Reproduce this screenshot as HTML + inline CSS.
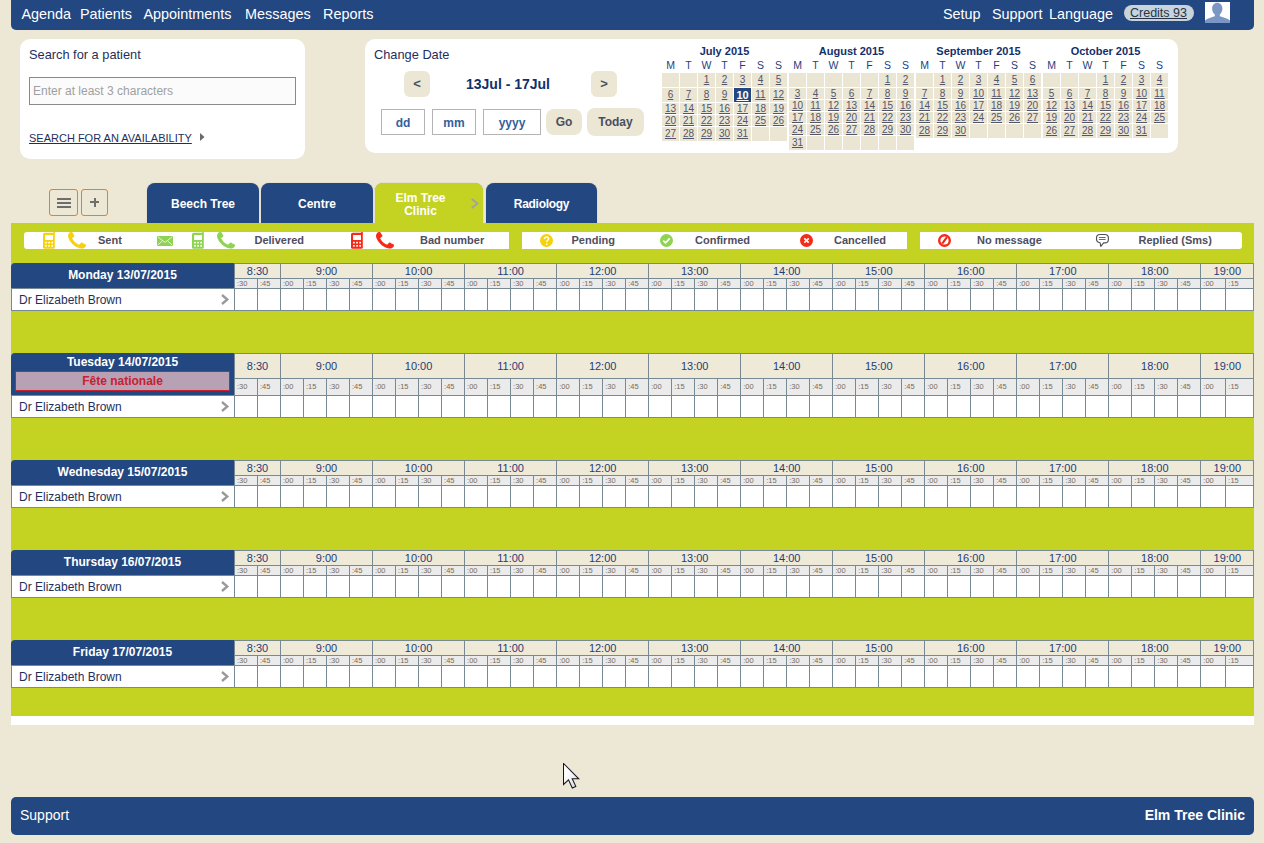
<!DOCTYPE html><html><head><meta charset="utf-8"><style>
*{margin:0;padding:0;box-sizing:border-box}
html,body{width:1264px;height:843px;overflow:hidden;background:#ede7d5;font-family:"Liberation Sans",sans-serif;position:relative}
.abs{position:absolute}
svg.abs{display:block}
.nav{position:absolute;left:11px;top:0;width:1243px;height:30px;background:#234780;border-radius:0 0 5px 5px}
.nav span{position:absolute;top:6px;font-size:14.4px;color:#fff;line-height:16px;white-space:nowrap}
.panel{position:absolute;background:#fff;border-radius:10px}
.t13{font-size:12.8px;color:#1f2f5c;line-height:15px;white-space:nowrap}
.btnb{position:absolute;background:#ece6d4;border-radius:6px;color:#465060;font-weight:bold;font-size:12px;text-align:center}
.inp{position:absolute;border:1px solid #b4b4b4;background:#fff;color:#33609c;font-weight:bold;font-size:12px;text-align:center}
.ttl{position:absolute;font-weight:bold;font-size:11px;color:#14306a;white-space:nowrap;line-height:12px;text-align:center;width:125px}
.dh{position:absolute;font-size:10.5px;color:#1f3f80;text-align:center;width:17px;line-height:12px}
.c{position:absolute;background:#ebe5d3;width:17px;font-size:10px;color:#52566a;text-align:center;text-decoration:underline}
.c.sel{background:#234780;color:#fff;font-weight:bold;font-size:11px}
.tab{position:absolute;top:183px;height:40px;background:#234780;border-radius:8px 8px 0 0;color:#fff;font-weight:bold;font-size:12px;text-align:center;box-shadow:0 0 1px #9a9a9a}
.lime{position:absolute;left:11px;top:223px;width:1243px;height:493px;background:#c4d222}
.leg{position:absolute;top:232px;height:17px;background:#fff}
.leg span{position:absolute;top:2px;font-size:11px;font-weight:bold;color:#4e4e5e;line-height:13px;white-space:nowrap}
.dayh{position:absolute;left:11px;width:223px;background:#234780;border-radius:4px 0 0 0;color:#fff;font-weight:bold;font-size:12px;text-align:center;line-height:14px}
.doc{position:absolute;left:11px;width:224px;height:23px;background:#fff;border:1px solid #778a93;border-right:none;font-size:12px;color:#1f2f5c;padding:4px 0 0 7px;line-height:14px}
.grid{position:absolute;left:234px;width:1020px;border-collapse:collapse;table-layout:fixed}
.grid td{border:1px solid #778a93;padding:0;overflow:hidden;white-space:nowrap}
.grid .h td{background:#efe9d8;font-size:11px;color:#1e3c78;text-align:center}
.grid .m td{background:#ebebeb;font-size:7.5px;color:#7a6a5a;padding-left:2px}
.grid .d td{background:#fff;height:22px}
.foot{position:absolute;left:11px;top:797px;width:1243px;height:38px;background:#234780;border-radius:5px;color:#fff}
</style></head><body>
<div class="nav">
<span style="left:10.5px">Agenda</span>
<span style="left:69px">Patients</span>
<span style="left:132.5px">Appointments</span>
<span style="left:234px">Messages</span>
<span style="left:312px">Reports</span>
<span style="left:932px">Setup</span>
<span style="left:981px">Support</span>
<span style="left:1038px">Language</span>
</div>
<div class="abs" style="left:1124px;top:5px;width:70px;height:16px;border-radius:8px;background:#c8d3db;"></div>
<div class="abs" style="left:1130px;top:6px;font-size:12.5px;line-height:15px;color:#263445;text-decoration:underline;white-space:nowrap">Credits 93</div>
<svg class="abs" style="left:1205px;top:2px" width="25" height="21" viewBox="0 0 25 21"><rect width="25" height="21" fill="#fff"/><path d="M12.2 0.8C9.2 0.8 7.1 3.2 7.1 6.6 7.1 9 8.1 11 9.8 12.4V14.3C7 15.4 2.2 16.4 0 18.6V21H25V18.6C22.8 16.4 17.8 15.4 14.8 14.3V12.4C16.5 11 17.4 9 17.4 6.6 17.4 3.2 15.3 0.8 12.2 0.8Z" fill="#7b96c4"/></svg>
<div class="panel" style="left:20px;top:39px;width:285px;height:120px"></div>
<div class="abs t13" style="left:29px;top:46.5px">Search for a patient</div>
<div class="abs" style="left:29px;top:77px;width:267px;height:28px;border:1px solid #8a8a8a;background:#fbfbfb;font-size:12px;color:#a0a0a0;padding:6px 0 0 3px;white-space:nowrap">Enter at least 3 characters</div>
<div class="abs" style="left:29px;top:132px;font-size:11px;color:#1f2f5c;text-decoration:underline;white-space:nowrap;line-height:13px">SEARCH FOR AN AVAILABILITY</div>
<svg class="abs" style="left:200px;top:133px" width="5" height="8"><path d="M0 0L4.5 4 0 8z" fill="#6a6a6a"/></svg>
<div class="panel" style="left:365px;top:39px;width:813px;height:114px"></div>
<div class="abs t13" style="left:374px;top:47px">Change Date</div>
<div class="btnb" style="left:404px;top:71px;width:26px;height:26px;line-height:26px;font-size:13px">&lt;</div>
<div class="btnb" style="left:591px;top:71px;width:26px;height:26px;line-height:26px;font-size:13px">&gt;</div>
<div class="abs" style="left:440px;top:76px;width:136px;text-align:center;font-weight:bold;font-size:14px;color:#14306a;line-height:16px">13Jul - 17Jul</div>
<div class="inp" style="left:381px;top:109px;width:44px;height:26px;line-height:26px">dd</div>
<div class="inp" style="left:432px;top:109px;width:44px;height:26px;line-height:26px">mm</div>
<div class="inp" style="left:483px;top:109px;width:58px;height:26px;line-height:26px">yyyy</div>
<div class="btnb" style="left:546px;top:109px;width:36px;height:26px;line-height:27px;border-radius:8px">Go</div>
<div class="btnb" style="left:587px;top:108px;width:57px;height:28px;line-height:29px;border-radius:8px">Today</div>
<div class="ttl" style="left:662px;top:45px">July 2015</div>
<div class="dh" style="left:662px;top:59px">M</div>
<div class="dh" style="left:680px;top:59px">T</div>
<div class="dh" style="left:698px;top:59px">W</div>
<div class="dh" style="left:716px;top:59px">T</div>
<div class="dh" style="left:734px;top:59px">F</div>
<div class="dh" style="left:752px;top:59px">S</div>
<div class="dh" style="left:770px;top:59px">S</div>
<div class="c" style="left:662px;top:73px;height:14px;line-height:14px"></div>
<div class="c" style="left:680px;top:73px;height:14px;line-height:14px"></div>
<div class="c" style="left:698px;top:73px;height:14px;line-height:14px">1</div>
<div class="c" style="left:716px;top:73px;height:14px;line-height:14px">2</div>
<div class="c" style="left:734px;top:73px;height:14px;line-height:14px">3</div>
<div class="c" style="left:752px;top:73px;height:14px;line-height:14px">4</div>
<div class="c" style="left:770px;top:73px;height:14px;line-height:14px">5</div>
<div class="c" style="left:662px;top:88px;height:14px;line-height:14px">6</div>
<div class="c" style="left:680px;top:88px;height:14px;line-height:14px">7</div>
<div class="c" style="left:698px;top:88px;height:14px;line-height:14px">8</div>
<div class="c" style="left:716px;top:88px;height:14px;line-height:14px">9</div>
<div class="c sel" style="left:734px;top:88px;height:14px;line-height:14px">10</div>
<div class="c" style="left:752px;top:88px;height:14px;line-height:14px">11</div>
<div class="c" style="left:770px;top:88px;height:14px;line-height:14px">12</div>
<div class="c" style="left:662px;top:103px;height:11px;line-height:11px">13</div>
<div class="c" style="left:680px;top:103px;height:11px;line-height:11px">14</div>
<div class="c" style="left:698px;top:103px;height:11px;line-height:11px">15</div>
<div class="c" style="left:716px;top:103px;height:11px;line-height:11px">16</div>
<div class="c" style="left:734px;top:103px;height:11px;line-height:11px">17</div>
<div class="c" style="left:752px;top:103px;height:11px;line-height:11px">18</div>
<div class="c" style="left:770px;top:103px;height:11px;line-height:11px">19</div>
<div class="c" style="left:662px;top:115px;height:11px;line-height:11px">20</div>
<div class="c" style="left:680px;top:115px;height:11px;line-height:11px">21</div>
<div class="c" style="left:698px;top:115px;height:11px;line-height:11px">22</div>
<div class="c" style="left:716px;top:115px;height:11px;line-height:11px">23</div>
<div class="c" style="left:734px;top:115px;height:11px;line-height:11px">24</div>
<div class="c" style="left:752px;top:115px;height:11px;line-height:11px">25</div>
<div class="c" style="left:770px;top:115px;height:11px;line-height:11px">26</div>
<div class="c" style="left:662px;top:127px;height:14px;line-height:14px">27</div>
<div class="c" style="left:680px;top:127px;height:14px;line-height:14px">28</div>
<div class="c" style="left:698px;top:127px;height:14px;line-height:14px">29</div>
<div class="c" style="left:716px;top:127px;height:14px;line-height:14px">30</div>
<div class="c" style="left:734px;top:127px;height:14px;line-height:14px">31</div>
<div class="c" style="left:752px;top:127px;height:14px;line-height:14px"></div>
<div class="c" style="left:770px;top:127px;height:14px;line-height:14px"></div>
<div class="ttl" style="left:789px;top:45px">August 2015</div>
<div class="dh" style="left:789px;top:59px">M</div>
<div class="dh" style="left:807px;top:59px">T</div>
<div class="dh" style="left:825px;top:59px">W</div>
<div class="dh" style="left:843px;top:59px">T</div>
<div class="dh" style="left:861px;top:59px">F</div>
<div class="dh" style="left:879px;top:59px">S</div>
<div class="dh" style="left:897px;top:59px">S</div>
<div class="c" style="left:789px;top:73px;height:14px;line-height:14px"></div>
<div class="c" style="left:807px;top:73px;height:14px;line-height:14px"></div>
<div class="c" style="left:825px;top:73px;height:14px;line-height:14px"></div>
<div class="c" style="left:843px;top:73px;height:14px;line-height:14px"></div>
<div class="c" style="left:861px;top:73px;height:14px;line-height:14px"></div>
<div class="c" style="left:879px;top:73px;height:14px;line-height:14px">1</div>
<div class="c" style="left:897px;top:73px;height:14px;line-height:14px">2</div>
<div class="c" style="left:789px;top:88px;height:11px;line-height:11px">3</div>
<div class="c" style="left:807px;top:88px;height:11px;line-height:11px">4</div>
<div class="c" style="left:825px;top:88px;height:11px;line-height:11px">5</div>
<div class="c" style="left:843px;top:88px;height:11px;line-height:11px">6</div>
<div class="c" style="left:861px;top:88px;height:11px;line-height:11px">7</div>
<div class="c" style="left:879px;top:88px;height:11px;line-height:11px">8</div>
<div class="c" style="left:897px;top:88px;height:11px;line-height:11px">9</div>
<div class="c" style="left:789px;top:100px;height:11px;line-height:11px">10</div>
<div class="c" style="left:807px;top:100px;height:11px;line-height:11px">11</div>
<div class="c" style="left:825px;top:100px;height:11px;line-height:11px">12</div>
<div class="c" style="left:843px;top:100px;height:11px;line-height:11px">13</div>
<div class="c" style="left:861px;top:100px;height:11px;line-height:11px">14</div>
<div class="c" style="left:879px;top:100px;height:11px;line-height:11px">15</div>
<div class="c" style="left:897px;top:100px;height:11px;line-height:11px">16</div>
<div class="c" style="left:789px;top:112px;height:11px;line-height:11px">17</div>
<div class="c" style="left:807px;top:112px;height:11px;line-height:11px">18</div>
<div class="c" style="left:825px;top:112px;height:11px;line-height:11px">19</div>
<div class="c" style="left:843px;top:112px;height:11px;line-height:11px">20</div>
<div class="c" style="left:861px;top:112px;height:11px;line-height:11px">21</div>
<div class="c" style="left:879px;top:112px;height:11px;line-height:11px">22</div>
<div class="c" style="left:897px;top:112px;height:11px;line-height:11px">23</div>
<div class="c" style="left:789px;top:124px;height:11px;line-height:11px">24</div>
<div class="c" style="left:807px;top:124px;height:11px;line-height:11px">25</div>
<div class="c" style="left:825px;top:124px;height:11px;line-height:11px">26</div>
<div class="c" style="left:843px;top:124px;height:11px;line-height:11px">27</div>
<div class="c" style="left:861px;top:124px;height:11px;line-height:11px">28</div>
<div class="c" style="left:879px;top:124px;height:11px;line-height:11px">29</div>
<div class="c" style="left:897px;top:124px;height:11px;line-height:11px">30</div>
<div class="c" style="left:789px;top:136px;height:14px;line-height:14px">31</div>
<div class="c" style="left:807px;top:136px;height:14px;line-height:14px"></div>
<div class="c" style="left:825px;top:136px;height:14px;line-height:14px"></div>
<div class="c" style="left:843px;top:136px;height:14px;line-height:14px"></div>
<div class="c" style="left:861px;top:136px;height:14px;line-height:14px"></div>
<div class="c" style="left:879px;top:136px;height:14px;line-height:14px"></div>
<div class="c" style="left:897px;top:136px;height:14px;line-height:14px"></div>
<div class="ttl" style="left:916px;top:45px">September 2015</div>
<div class="dh" style="left:916px;top:59px">M</div>
<div class="dh" style="left:934px;top:59px">T</div>
<div class="dh" style="left:952px;top:59px">W</div>
<div class="dh" style="left:970px;top:59px">T</div>
<div class="dh" style="left:988px;top:59px">F</div>
<div class="dh" style="left:1006px;top:59px">S</div>
<div class="dh" style="left:1024px;top:59px">S</div>
<div class="c" style="left:916px;top:73px;height:14px;line-height:14px"></div>
<div class="c" style="left:934px;top:73px;height:14px;line-height:14px">1</div>
<div class="c" style="left:952px;top:73px;height:14px;line-height:14px">2</div>
<div class="c" style="left:970px;top:73px;height:14px;line-height:14px">3</div>
<div class="c" style="left:988px;top:73px;height:14px;line-height:14px">4</div>
<div class="c" style="left:1006px;top:73px;height:14px;line-height:14px">5</div>
<div class="c" style="left:1024px;top:73px;height:14px;line-height:14px">6</div>
<div class="c" style="left:916px;top:88px;height:11px;line-height:11px">7</div>
<div class="c" style="left:934px;top:88px;height:11px;line-height:11px">8</div>
<div class="c" style="left:952px;top:88px;height:11px;line-height:11px">9</div>
<div class="c" style="left:970px;top:88px;height:11px;line-height:11px">10</div>
<div class="c" style="left:988px;top:88px;height:11px;line-height:11px">11</div>
<div class="c" style="left:1006px;top:88px;height:11px;line-height:11px">12</div>
<div class="c" style="left:1024px;top:88px;height:11px;line-height:11px">13</div>
<div class="c" style="left:916px;top:100px;height:11px;line-height:11px">14</div>
<div class="c" style="left:934px;top:100px;height:11px;line-height:11px">15</div>
<div class="c" style="left:952px;top:100px;height:11px;line-height:11px">16</div>
<div class="c" style="left:970px;top:100px;height:11px;line-height:11px">17</div>
<div class="c" style="left:988px;top:100px;height:11px;line-height:11px">18</div>
<div class="c" style="left:1006px;top:100px;height:11px;line-height:11px">19</div>
<div class="c" style="left:1024px;top:100px;height:11px;line-height:11px">20</div>
<div class="c" style="left:916px;top:112px;height:11px;line-height:11px">21</div>
<div class="c" style="left:934px;top:112px;height:11px;line-height:11px">22</div>
<div class="c" style="left:952px;top:112px;height:11px;line-height:11px">23</div>
<div class="c" style="left:970px;top:112px;height:11px;line-height:11px">24</div>
<div class="c" style="left:988px;top:112px;height:11px;line-height:11px">25</div>
<div class="c" style="left:1006px;top:112px;height:11px;line-height:11px">26</div>
<div class="c" style="left:1024px;top:112px;height:11px;line-height:11px">27</div>
<div class="c" style="left:916px;top:124px;height:14px;line-height:14px">28</div>
<div class="c" style="left:934px;top:124px;height:14px;line-height:14px">29</div>
<div class="c" style="left:952px;top:124px;height:14px;line-height:14px">30</div>
<div class="c" style="left:970px;top:124px;height:14px;line-height:14px"></div>
<div class="c" style="left:988px;top:124px;height:14px;line-height:14px"></div>
<div class="c" style="left:1006px;top:124px;height:14px;line-height:14px"></div>
<div class="c" style="left:1024px;top:124px;height:14px;line-height:14px"></div>
<div class="ttl" style="left:1043px;top:45px">October 2015</div>
<div class="dh" style="left:1043px;top:59px">M</div>
<div class="dh" style="left:1061px;top:59px">T</div>
<div class="dh" style="left:1079px;top:59px">W</div>
<div class="dh" style="left:1097px;top:59px">T</div>
<div class="dh" style="left:1115px;top:59px">F</div>
<div class="dh" style="left:1133px;top:59px">S</div>
<div class="dh" style="left:1151px;top:59px">S</div>
<div class="c" style="left:1043px;top:73px;height:14px;line-height:14px"></div>
<div class="c" style="left:1061px;top:73px;height:14px;line-height:14px"></div>
<div class="c" style="left:1079px;top:73px;height:14px;line-height:14px"></div>
<div class="c" style="left:1097px;top:73px;height:14px;line-height:14px">1</div>
<div class="c" style="left:1115px;top:73px;height:14px;line-height:14px">2</div>
<div class="c" style="left:1133px;top:73px;height:14px;line-height:14px">3</div>
<div class="c" style="left:1151px;top:73px;height:14px;line-height:14px">4</div>
<div class="c" style="left:1043px;top:88px;height:11px;line-height:11px">5</div>
<div class="c" style="left:1061px;top:88px;height:11px;line-height:11px">6</div>
<div class="c" style="left:1079px;top:88px;height:11px;line-height:11px">7</div>
<div class="c" style="left:1097px;top:88px;height:11px;line-height:11px">8</div>
<div class="c" style="left:1115px;top:88px;height:11px;line-height:11px">9</div>
<div class="c" style="left:1133px;top:88px;height:11px;line-height:11px">10</div>
<div class="c" style="left:1151px;top:88px;height:11px;line-height:11px">11</div>
<div class="c" style="left:1043px;top:100px;height:11px;line-height:11px">12</div>
<div class="c" style="left:1061px;top:100px;height:11px;line-height:11px">13</div>
<div class="c" style="left:1079px;top:100px;height:11px;line-height:11px">14</div>
<div class="c" style="left:1097px;top:100px;height:11px;line-height:11px">15</div>
<div class="c" style="left:1115px;top:100px;height:11px;line-height:11px">16</div>
<div class="c" style="left:1133px;top:100px;height:11px;line-height:11px">17</div>
<div class="c" style="left:1151px;top:100px;height:11px;line-height:11px">18</div>
<div class="c" style="left:1043px;top:112px;height:11px;line-height:11px">19</div>
<div class="c" style="left:1061px;top:112px;height:11px;line-height:11px">20</div>
<div class="c" style="left:1079px;top:112px;height:11px;line-height:11px">21</div>
<div class="c" style="left:1097px;top:112px;height:11px;line-height:11px">22</div>
<div class="c" style="left:1115px;top:112px;height:11px;line-height:11px">23</div>
<div class="c" style="left:1133px;top:112px;height:11px;line-height:11px">24</div>
<div class="c" style="left:1151px;top:112px;height:11px;line-height:11px">25</div>
<div class="c" style="left:1043px;top:124px;height:14px;line-height:14px">26</div>
<div class="c" style="left:1061px;top:124px;height:14px;line-height:14px">27</div>
<div class="c" style="left:1079px;top:124px;height:14px;line-height:14px">28</div>
<div class="c" style="left:1097px;top:124px;height:14px;line-height:14px">29</div>
<div class="c" style="left:1115px;top:124px;height:14px;line-height:14px">30</div>
<div class="c" style="left:1133px;top:124px;height:14px;line-height:14px">31</div>
<div class="c" style="left:1151px;top:124px;height:14px;line-height:14px"></div>
<div class="abs" style="left:49px;top:189px;width:29px;height:27px;border:1px solid #e0812e;border-radius:3px"></div>
<div class="abs" style="left:57px;top:198px;width:14px;height:2px;background:#6d6d6d"></div>
<div class="abs" style="left:57px;top:202px;width:14px;height:2px;background:#6d6d6d"></div>
<div class="abs" style="left:57px;top:206px;width:14px;height:2px;background:#6d6d6d"></div>
<div class="abs" style="left:81px;top:189px;width:27px;height:27px;border:1px solid #e0812e;border-radius:3px"></div>
<div class="abs" style="left:90px;top:201.2px;width:9px;height:2px;background:#6f6f6f"></div>
<div class="abs" style="left:93.5px;top:198px;width:2px;height:9px;background:#6f6f6f"></div>
<div class="tab" style="left:147px;width:112px;line-height:42px">Beech Tree</div>
<div class="tab" style="left:261px;width:112px;line-height:42px">Centre</div>
<div class="tab" style="left:375px;width:108px;background:#c4d222;line-height:13px;padding-top:9px;padding-right:17px">Elm Tree<br>Clinic</div>
<svg class="abs" style="left:468px;top:195px" width="14" height="17"><path d="M3.8 4L9.5 8.5 3.8 13" stroke="#9ea3a8" stroke-width="1.9" fill="none"/></svg>
<div class="tab" style="left:486px;width:111px;line-height:42px;letter-spacing:-0.3px">Radiology</div>
<div class="lime"></div>
<div class="abs" style="left:11px;top:716px;width:1243px;height:9px;background:#fff"></div>
<div class="leg" style="left:24px;width:485px;border-radius:3px 0 0 3px"><span style="left:74px">Sent</span><span style="left:230.5px">Delivered</span><span style="left:396px">Bad number</span></div>
<div class="leg" style="left:522px;width:385px"><span style="left:49.5px">Pending</span><span style="left:173px">Confirmed</span><span style="left:312px">Cancelled</span></div>
<div class="leg" style="left:920px;width:322px;border-radius:0 3px 3px 0"><span style="left:57px">No message</span><span style="left:218.5px">Replied (Sms)</span></div>
<svg class="abs" style="left:43px;top:232px" width="12" height="17" viewBox="0 0 12 17"><rect x="0" y="0.8" width="11.8" height="16" rx="1.6" fill="#f6d10e"/><rect x="10.2" y="0" width="1.6" height="2" fill="#f6d10e"/><rect x="2.1" y="3" width="7.9" height="5" fill="#fff"/><rect x="2.1" y="9.8" width="1.7" height="1.7" fill="#fff"/><rect x="2.1" y="13" width="1.7" height="1.7" fill="#fff"/><rect x="5.2" y="9.8" width="1.7" height="1.7" fill="#fff"/><rect x="5.2" y="13" width="1.7" height="1.7" fill="#fff"/><rect x="8.3" y="9.8" width="1.7" height="1.7" fill="#fff"/><rect x="8.3" y="13" width="1.7" height="1.7" fill="#fff"/></svg>
<svg class="abs" style="left:68px;top:232px" width="18" height="16.5" viewBox="0 128 1408 1408" preserveAspectRatio="none"><path d="M1408 1240q0 27-10 70.5t-21 68.5q-21 50-122 106-94 51-186 51-27 0-53-3.5t-57.5-12.5-47-14.5-55.5-20.5-49-18q-98-35-175-83-127-79-264-216t-216-264q-48-77-83-175-3-9-18-49t-20.5-55.5-14.5-47-12.5-57.5-3.5-53q0-92 51-186 56-101 106-122 25-11 68.5-21t70.5-10q14 0 21 3 18 6 53 76 11 19 30 54t35 63.5 31 53.5q3 4 17.5 25t21.5 35.5 7 28.5q0 20-28.5 50t-62 55-62 53-28.5 46q0 9 5 22.5t8.5 20.5 14 24 11.5 19q76 137 174 235t235 174q2 1 19 11.5t24 14 20.5 8.5 22.5 5q18 0 46-28.5t53-62 55-62 50-28.5q14 0 28.5 7t35.5 21.5 25 17.5q25 15 53.5 31t63.5 35 54 30q70 35 76 53 3 7 3 21z" fill="#f6d10e"/></svg>
<svg class="abs" style="left:157px;top:236px" width="16" height="10" viewBox="0 0 16 10"><rect width="16" height="10" rx="1" fill="#8fd353"/><path d="M1 1L8 6.4 15 1M1 8.9L5.4 4.9M15 8.9L10.6 4.9" stroke="#fff" stroke-width="0.9" fill="none" opacity="0.85"/></svg>
<svg class="abs" style="left:192px;top:232px" width="12" height="17" viewBox="0 0 12 17"><rect x="0" y="0.8" width="11.8" height="16" rx="1.6" fill="#8fd353"/><rect x="10.2" y="0" width="1.6" height="2" fill="#8fd353"/><rect x="2.1" y="3" width="7.9" height="5" fill="#fff"/><rect x="2.1" y="9.8" width="1.7" height="1.7" fill="#fff"/><rect x="2.1" y="13" width="1.7" height="1.7" fill="#fff"/><rect x="5.2" y="9.8" width="1.7" height="1.7" fill="#fff"/><rect x="5.2" y="13" width="1.7" height="1.7" fill="#fff"/><rect x="8.3" y="9.8" width="1.7" height="1.7" fill="#fff"/><rect x="8.3" y="13" width="1.7" height="1.7" fill="#fff"/></svg>
<svg class="abs" style="left:217px;top:232px" width="18" height="16.5" viewBox="0 128 1408 1408" preserveAspectRatio="none"><path d="M1408 1240q0 27-10 70.5t-21 68.5q-21 50-122 106-94 51-186 51-27 0-53-3.5t-57.5-12.5-47-14.5-55.5-20.5-49-18q-98-35-175-83-127-79-264-216t-216-264q-48-77-83-175-3-9-18-49t-20.5-55.5-14.5-47-12.5-57.5-3.5-53q0-92 51-186 56-101 106-122 25-11 68.5-21t70.5-10q14 0 21 3 18 6 53 76 11 19 30 54t35 63.5 31 53.5q3 4 17.5 25t21.5 35.5 7 28.5q0 20-28.5 50t-62 55-62 53-28.5 46q0 9 5 22.5t8.5 20.5 14 24 11.5 19q76 137 174 235t235 174q2 1 19 11.5t24 14 20.5 8.5 22.5 5q18 0 46-28.5t53-62 55-62 50-28.5q14 0 28.5 7t35.5 21.5 25 17.5q25 15 53.5 31t63.5 35 54 30q70 35 76 53 3 7 3 21z" fill="#8fd353"/></svg>
<svg class="abs" style="left:351px;top:232px" width="12" height="17" viewBox="0 0 12 17"><rect x="0" y="0.8" width="11.8" height="16" rx="1.6" fill="#f52a18"/><rect x="10.2" y="0" width="1.6" height="2" fill="#f52a18"/><rect x="2.1" y="3" width="7.9" height="5" fill="#fff"/><rect x="2.1" y="9.8" width="1.7" height="1.7" fill="#fff"/><rect x="2.1" y="13" width="1.7" height="1.7" fill="#fff"/><rect x="5.2" y="9.8" width="1.7" height="1.7" fill="#fff"/><rect x="5.2" y="13" width="1.7" height="1.7" fill="#fff"/><rect x="8.3" y="9.8" width="1.7" height="1.7" fill="#fff"/><rect x="8.3" y="13" width="1.7" height="1.7" fill="#fff"/></svg>
<svg class="abs" style="left:376px;top:232px" width="18" height="16.5" viewBox="0 128 1408 1408" preserveAspectRatio="none"><path d="M1408 1240q0 27-10 70.5t-21 68.5q-21 50-122 106-94 51-186 51-27 0-53-3.5t-57.5-12.5-47-14.5-55.5-20.5-49-18q-98-35-175-83-127-79-264-216t-216-264q-48-77-83-175-3-9-18-49t-20.5-55.5-14.5-47-12.5-57.5-3.5-53q0-92 51-186 56-101 106-122 25-11 68.5-21t70.5-10q14 0 21 3 18 6 53 76 11 19 30 54t35 63.5 31 53.5q3 4 17.5 25t21.5 35.5 7 28.5q0 20-28.5 50t-62 55-62 53-28.5 46q0 9 5 22.5t8.5 20.5 14 24 11.5 19q76 137 174 235t235 174q2 1 19 11.5t24 14 20.5 8.5 22.5 5q18 0 46-28.5t53-62 55-62 50-28.5q14 0 28.5 7t35.5 21.5 25 17.5q25 15 53.5 31t63.5 35 54 30q70 35 76 53 3 7 3 21z" fill="#f52a18"/></svg>
<svg class="abs" style="left:540px;top:234px" width="13" height="13" viewBox="0 0 13 13"><circle cx="6.5" cy="6.5" r="6.5" fill="#f6d10e"/><path d="M4.4 5.0c0-1.3.9-2.1 2.1-2.1s2.1.8 2.1 1.9c0 1.4-1.9 1.5-1.9 3.1" stroke="#fff" stroke-width="1.5" fill="none"/><circle cx="6.7" cy="10.1" r="0.9" fill="#fff"/></svg>
<svg class="abs" style="left:660px;top:234px" width="13" height="13" viewBox="0 0 13 13"><circle cx="6.5" cy="6.5" r="6.5" fill="#8fd353"/><path d="M3.3 6.7L5.5 8.8 9.8 4.3" stroke="#fff" stroke-width="1.7" fill="none"/></svg>
<svg class="abs" style="left:800px;top:234px" width="13" height="13" viewBox="0 0 13 13"><circle cx="6.5" cy="6.5" r="6.5" fill="#f52a18"/><path d="M4.3 4.3L8.7 8.7M8.7 4.3L4.3 8.7" stroke="#fff" stroke-width="1.7" fill="none"/></svg>
<svg class="abs" style="left:938px;top:234px" width="13" height="13" viewBox="0 0 13 13"><circle cx="6.5" cy="6.5" r="5.3" stroke="#f52a18" stroke-width="2.4" fill="none"/><path d="M9 3.2L4.2 9.6" stroke="#f52a18" stroke-width="2.2"/></svg>
<svg class="abs" style="left:1095px;top:233px" width="15" height="15" viewBox="0 0 15 15"><path d="M5 1.5H9.9C11.9 1.5 13.4 3 13.4 5V6.4C13.4 8.4 11.9 9.9 9.9 9.9H8.6L5.8 13.4 5.1 9.8C3 9.5 1.5 8 1.5 6V5C1.5 3 3 1.5 5 1.5Z" stroke="#505050" stroke-width="1.15" fill="#fff" stroke-linejoin="round"/><path d="M3.9 4.5h6.7M3.9 6.5h6.7" stroke="#5a5a5a" stroke-width="0.9"/></svg>
<div class="dayh" style="top:263px;height:25px;padding-top:5px">Monday 13/07/2015</div>
<div class="doc" style="top:288px">Dr Elizabeth Brown</div>
<svg class="abs" style="left:218px;top:293px" width="12" height="12"><path d="M4 2L9.3 6.5 4 11" stroke="#999" stroke-width="2.3" fill="none"/></svg>
<table class="grid" style="top:263px"><colgroup><col style="width:23px"><col style="width:23px"><col style="width:23px"><col style="width:23px"><col style="width:23px"><col style="width:23px"><col style="width:23px"><col style="width:23px"><col style="width:23px"><col style="width:23px"><col style="width:23px"><col style="width:23px"><col style="width:23px"><col style="width:23px"><col style="width:23px"><col style="width:23px"><col style="width:23px"><col style="width:23px"><col style="width:23px"><col style="width:23px"><col style="width:23px"><col style="width:23px"><col style="width:23px"><col style="width:23px"><col style="width:23px"><col style="width:23px"><col style="width:23px"><col style="width:23px"><col style="width:23px"><col style="width:23px"><col style="width:23px"><col style="width:23px"><col style="width:23px"><col style="width:23px"><col style="width:23px"><col style="width:23px"><col style="width:23px"><col style="width:23px"><col style="width:23px"><col style="width:23px"><col style="width:23px"><col style="width:23px"><col style="width:25px"><col style="width:28px"></colgroup>
<tr class="h"><td colspan="2" style="height:15px;line-height:13px">8:30</td><td colspan="4" style="height:15px;line-height:13px">9:00</td><td colspan="4" style="height:15px;line-height:13px">10:00</td><td colspan="4" style="height:15px;line-height:13px">11:00</td><td colspan="4" style="height:15px;line-height:13px">12:00</td><td colspan="4" style="height:15px;line-height:13px">13:00</td><td colspan="4" style="height:15px;line-height:13px">14:00</td><td colspan="4" style="height:15px;line-height:13px">15:00</td><td colspan="4" style="height:15px;line-height:13px">16:00</td><td colspan="4" style="height:15px;line-height:13px">17:00</td><td colspan="4" style="height:15px;line-height:13px">18:00</td><td colspan="2" style="height:15px;line-height:13px">19:00</td></tr>
<tr class="m"><td style="height:10px;line-height:9px">:30</td><td style="height:10px;line-height:9px">:45</td><td style="height:10px;line-height:9px">:00</td><td style="height:10px;line-height:9px">:15</td><td style="height:10px;line-height:9px">:30</td><td style="height:10px;line-height:9px">:45</td><td style="height:10px;line-height:9px">:00</td><td style="height:10px;line-height:9px">:15</td><td style="height:10px;line-height:9px">:30</td><td style="height:10px;line-height:9px">:45</td><td style="height:10px;line-height:9px">:00</td><td style="height:10px;line-height:9px">:15</td><td style="height:10px;line-height:9px">:30</td><td style="height:10px;line-height:9px">:45</td><td style="height:10px;line-height:9px">:00</td><td style="height:10px;line-height:9px">:15</td><td style="height:10px;line-height:9px">:30</td><td style="height:10px;line-height:9px">:45</td><td style="height:10px;line-height:9px">:00</td><td style="height:10px;line-height:9px">:15</td><td style="height:10px;line-height:9px">:30</td><td style="height:10px;line-height:9px">:45</td><td style="height:10px;line-height:9px">:00</td><td style="height:10px;line-height:9px">:15</td><td style="height:10px;line-height:9px">:30</td><td style="height:10px;line-height:9px">:45</td><td style="height:10px;line-height:9px">:00</td><td style="height:10px;line-height:9px">:15</td><td style="height:10px;line-height:9px">:30</td><td style="height:10px;line-height:9px">:45</td><td style="height:10px;line-height:9px">:00</td><td style="height:10px;line-height:9px">:15</td><td style="height:10px;line-height:9px">:30</td><td style="height:10px;line-height:9px">:45</td><td style="height:10px;line-height:9px">:00</td><td style="height:10px;line-height:9px">:15</td><td style="height:10px;line-height:9px">:30</td><td style="height:10px;line-height:9px">:45</td><td style="height:10px;line-height:9px">:00</td><td style="height:10px;line-height:9px">:15</td><td style="height:10px;line-height:9px">:30</td><td style="height:10px;line-height:9px">:45</td><td style="height:10px;line-height:9px">:00</td><td style="height:10px;line-height:9px">:15</td></tr>
<tr class="d"><td></td><td></td><td></td><td></td><td></td><td></td><td></td><td></td><td></td><td></td><td></td><td></td><td></td><td></td><td></td><td></td><td></td><td></td><td></td><td></td><td></td><td></td><td></td><td></td><td></td><td></td><td></td><td></td><td></td><td></td><td></td><td></td><td></td><td></td><td></td><td></td><td></td><td></td><td></td><td></td><td></td><td></td><td></td><td></td></tr>
</table>
<div class="dayh" style="top:353px;height:42px;padding-top:2px">Tuesday 14/07/2015</div>
<div class="abs" style="left:15px;top:371px;width:215px;height:20px;background:#b8a1b5;border:1.5px solid #c8202e;color:#c8202e;font-weight:bold;font-size:12px;text-align:center;line-height:17px;padding-top:0.5px">Fête nationale</div>
<div class="doc" style="top:395px">Dr Elizabeth Brown</div>
<svg class="abs" style="left:218px;top:400px" width="12" height="12"><path d="M4 2L9.3 6.5 4 11" stroke="#999" stroke-width="2.3" fill="none"/></svg>
<table class="grid" style="top:353px"><colgroup><col style="width:23px"><col style="width:23px"><col style="width:23px"><col style="width:23px"><col style="width:23px"><col style="width:23px"><col style="width:23px"><col style="width:23px"><col style="width:23px"><col style="width:23px"><col style="width:23px"><col style="width:23px"><col style="width:23px"><col style="width:23px"><col style="width:23px"><col style="width:23px"><col style="width:23px"><col style="width:23px"><col style="width:23px"><col style="width:23px"><col style="width:23px"><col style="width:23px"><col style="width:23px"><col style="width:23px"><col style="width:23px"><col style="width:23px"><col style="width:23px"><col style="width:23px"><col style="width:23px"><col style="width:23px"><col style="width:23px"><col style="width:23px"><col style="width:23px"><col style="width:23px"><col style="width:23px"><col style="width:23px"><col style="width:23px"><col style="width:23px"><col style="width:23px"><col style="width:23px"><col style="width:23px"><col style="width:23px"><col style="width:25px"><col style="width:28px"></colgroup>
<tr class="h"><td colspan="2" style="height:25px;line-height:23px">8:30</td><td colspan="4" style="height:25px;line-height:23px">9:00</td><td colspan="4" style="height:25px;line-height:23px">10:00</td><td colspan="4" style="height:25px;line-height:23px">11:00</td><td colspan="4" style="height:25px;line-height:23px">12:00</td><td colspan="4" style="height:25px;line-height:23px">13:00</td><td colspan="4" style="height:25px;line-height:23px">14:00</td><td colspan="4" style="height:25px;line-height:23px">15:00</td><td colspan="4" style="height:25px;line-height:23px">16:00</td><td colspan="4" style="height:25px;line-height:23px">17:00</td><td colspan="4" style="height:25px;line-height:23px">18:00</td><td colspan="2" style="height:25px;line-height:23px">19:00</td></tr>
<tr class="m"><td style="height:17px;line-height:16px">:30</td><td style="height:17px;line-height:16px">:45</td><td style="height:17px;line-height:16px">:00</td><td style="height:17px;line-height:16px">:15</td><td style="height:17px;line-height:16px">:30</td><td style="height:17px;line-height:16px">:45</td><td style="height:17px;line-height:16px">:00</td><td style="height:17px;line-height:16px">:15</td><td style="height:17px;line-height:16px">:30</td><td style="height:17px;line-height:16px">:45</td><td style="height:17px;line-height:16px">:00</td><td style="height:17px;line-height:16px">:15</td><td style="height:17px;line-height:16px">:30</td><td style="height:17px;line-height:16px">:45</td><td style="height:17px;line-height:16px">:00</td><td style="height:17px;line-height:16px">:15</td><td style="height:17px;line-height:16px">:30</td><td style="height:17px;line-height:16px">:45</td><td style="height:17px;line-height:16px">:00</td><td style="height:17px;line-height:16px">:15</td><td style="height:17px;line-height:16px">:30</td><td style="height:17px;line-height:16px">:45</td><td style="height:17px;line-height:16px">:00</td><td style="height:17px;line-height:16px">:15</td><td style="height:17px;line-height:16px">:30</td><td style="height:17px;line-height:16px">:45</td><td style="height:17px;line-height:16px">:00</td><td style="height:17px;line-height:16px">:15</td><td style="height:17px;line-height:16px">:30</td><td style="height:17px;line-height:16px">:45</td><td style="height:17px;line-height:16px">:00</td><td style="height:17px;line-height:16px">:15</td><td style="height:17px;line-height:16px">:30</td><td style="height:17px;line-height:16px">:45</td><td style="height:17px;line-height:16px">:00</td><td style="height:17px;line-height:16px">:15</td><td style="height:17px;line-height:16px">:30</td><td style="height:17px;line-height:16px">:45</td><td style="height:17px;line-height:16px">:00</td><td style="height:17px;line-height:16px">:15</td><td style="height:17px;line-height:16px">:30</td><td style="height:17px;line-height:16px">:45</td><td style="height:17px;line-height:16px">:00</td><td style="height:17px;line-height:16px">:15</td></tr>
<tr class="d"><td></td><td></td><td></td><td></td><td></td><td></td><td></td><td></td><td></td><td></td><td></td><td></td><td></td><td></td><td></td><td></td><td></td><td></td><td></td><td></td><td></td><td></td><td></td><td></td><td></td><td></td><td></td><td></td><td></td><td></td><td></td><td></td><td></td><td></td><td></td><td></td><td></td><td></td><td></td><td></td><td></td><td></td><td></td><td></td></tr>
</table>
<div class="dayh" style="top:460px;height:25px;padding-top:5px">Wednesday 15/07/2015</div>
<div class="doc" style="top:485px">Dr Elizabeth Brown</div>
<svg class="abs" style="left:218px;top:490px" width="12" height="12"><path d="M4 2L9.3 6.5 4 11" stroke="#999" stroke-width="2.3" fill="none"/></svg>
<table class="grid" style="top:460px"><colgroup><col style="width:23px"><col style="width:23px"><col style="width:23px"><col style="width:23px"><col style="width:23px"><col style="width:23px"><col style="width:23px"><col style="width:23px"><col style="width:23px"><col style="width:23px"><col style="width:23px"><col style="width:23px"><col style="width:23px"><col style="width:23px"><col style="width:23px"><col style="width:23px"><col style="width:23px"><col style="width:23px"><col style="width:23px"><col style="width:23px"><col style="width:23px"><col style="width:23px"><col style="width:23px"><col style="width:23px"><col style="width:23px"><col style="width:23px"><col style="width:23px"><col style="width:23px"><col style="width:23px"><col style="width:23px"><col style="width:23px"><col style="width:23px"><col style="width:23px"><col style="width:23px"><col style="width:23px"><col style="width:23px"><col style="width:23px"><col style="width:23px"><col style="width:23px"><col style="width:23px"><col style="width:23px"><col style="width:23px"><col style="width:25px"><col style="width:28px"></colgroup>
<tr class="h"><td colspan="2" style="height:15px;line-height:13px">8:30</td><td colspan="4" style="height:15px;line-height:13px">9:00</td><td colspan="4" style="height:15px;line-height:13px">10:00</td><td colspan="4" style="height:15px;line-height:13px">11:00</td><td colspan="4" style="height:15px;line-height:13px">12:00</td><td colspan="4" style="height:15px;line-height:13px">13:00</td><td colspan="4" style="height:15px;line-height:13px">14:00</td><td colspan="4" style="height:15px;line-height:13px">15:00</td><td colspan="4" style="height:15px;line-height:13px">16:00</td><td colspan="4" style="height:15px;line-height:13px">17:00</td><td colspan="4" style="height:15px;line-height:13px">18:00</td><td colspan="2" style="height:15px;line-height:13px">19:00</td></tr>
<tr class="m"><td style="height:10px;line-height:9px">:30</td><td style="height:10px;line-height:9px">:45</td><td style="height:10px;line-height:9px">:00</td><td style="height:10px;line-height:9px">:15</td><td style="height:10px;line-height:9px">:30</td><td style="height:10px;line-height:9px">:45</td><td style="height:10px;line-height:9px">:00</td><td style="height:10px;line-height:9px">:15</td><td style="height:10px;line-height:9px">:30</td><td style="height:10px;line-height:9px">:45</td><td style="height:10px;line-height:9px">:00</td><td style="height:10px;line-height:9px">:15</td><td style="height:10px;line-height:9px">:30</td><td style="height:10px;line-height:9px">:45</td><td style="height:10px;line-height:9px">:00</td><td style="height:10px;line-height:9px">:15</td><td style="height:10px;line-height:9px">:30</td><td style="height:10px;line-height:9px">:45</td><td style="height:10px;line-height:9px">:00</td><td style="height:10px;line-height:9px">:15</td><td style="height:10px;line-height:9px">:30</td><td style="height:10px;line-height:9px">:45</td><td style="height:10px;line-height:9px">:00</td><td style="height:10px;line-height:9px">:15</td><td style="height:10px;line-height:9px">:30</td><td style="height:10px;line-height:9px">:45</td><td style="height:10px;line-height:9px">:00</td><td style="height:10px;line-height:9px">:15</td><td style="height:10px;line-height:9px">:30</td><td style="height:10px;line-height:9px">:45</td><td style="height:10px;line-height:9px">:00</td><td style="height:10px;line-height:9px">:15</td><td style="height:10px;line-height:9px">:30</td><td style="height:10px;line-height:9px">:45</td><td style="height:10px;line-height:9px">:00</td><td style="height:10px;line-height:9px">:15</td><td style="height:10px;line-height:9px">:30</td><td style="height:10px;line-height:9px">:45</td><td style="height:10px;line-height:9px">:00</td><td style="height:10px;line-height:9px">:15</td><td style="height:10px;line-height:9px">:30</td><td style="height:10px;line-height:9px">:45</td><td style="height:10px;line-height:9px">:00</td><td style="height:10px;line-height:9px">:15</td></tr>
<tr class="d"><td></td><td></td><td></td><td></td><td></td><td></td><td></td><td></td><td></td><td></td><td></td><td></td><td></td><td></td><td></td><td></td><td></td><td></td><td></td><td></td><td></td><td></td><td></td><td></td><td></td><td></td><td></td><td></td><td></td><td></td><td></td><td></td><td></td><td></td><td></td><td></td><td></td><td></td><td></td><td></td><td></td><td></td><td></td><td></td></tr>
</table>
<div class="dayh" style="top:550px;height:25px;padding-top:5px">Thursday 16/07/2015</div>
<div class="doc" style="top:575px">Dr Elizabeth Brown</div>
<svg class="abs" style="left:218px;top:580px" width="12" height="12"><path d="M4 2L9.3 6.5 4 11" stroke="#999" stroke-width="2.3" fill="none"/></svg>
<table class="grid" style="top:550px"><colgroup><col style="width:23px"><col style="width:23px"><col style="width:23px"><col style="width:23px"><col style="width:23px"><col style="width:23px"><col style="width:23px"><col style="width:23px"><col style="width:23px"><col style="width:23px"><col style="width:23px"><col style="width:23px"><col style="width:23px"><col style="width:23px"><col style="width:23px"><col style="width:23px"><col style="width:23px"><col style="width:23px"><col style="width:23px"><col style="width:23px"><col style="width:23px"><col style="width:23px"><col style="width:23px"><col style="width:23px"><col style="width:23px"><col style="width:23px"><col style="width:23px"><col style="width:23px"><col style="width:23px"><col style="width:23px"><col style="width:23px"><col style="width:23px"><col style="width:23px"><col style="width:23px"><col style="width:23px"><col style="width:23px"><col style="width:23px"><col style="width:23px"><col style="width:23px"><col style="width:23px"><col style="width:23px"><col style="width:23px"><col style="width:25px"><col style="width:28px"></colgroup>
<tr class="h"><td colspan="2" style="height:15px;line-height:13px">8:30</td><td colspan="4" style="height:15px;line-height:13px">9:00</td><td colspan="4" style="height:15px;line-height:13px">10:00</td><td colspan="4" style="height:15px;line-height:13px">11:00</td><td colspan="4" style="height:15px;line-height:13px">12:00</td><td colspan="4" style="height:15px;line-height:13px">13:00</td><td colspan="4" style="height:15px;line-height:13px">14:00</td><td colspan="4" style="height:15px;line-height:13px">15:00</td><td colspan="4" style="height:15px;line-height:13px">16:00</td><td colspan="4" style="height:15px;line-height:13px">17:00</td><td colspan="4" style="height:15px;line-height:13px">18:00</td><td colspan="2" style="height:15px;line-height:13px">19:00</td></tr>
<tr class="m"><td style="height:10px;line-height:9px">:30</td><td style="height:10px;line-height:9px">:45</td><td style="height:10px;line-height:9px">:00</td><td style="height:10px;line-height:9px">:15</td><td style="height:10px;line-height:9px">:30</td><td style="height:10px;line-height:9px">:45</td><td style="height:10px;line-height:9px">:00</td><td style="height:10px;line-height:9px">:15</td><td style="height:10px;line-height:9px">:30</td><td style="height:10px;line-height:9px">:45</td><td style="height:10px;line-height:9px">:00</td><td style="height:10px;line-height:9px">:15</td><td style="height:10px;line-height:9px">:30</td><td style="height:10px;line-height:9px">:45</td><td style="height:10px;line-height:9px">:00</td><td style="height:10px;line-height:9px">:15</td><td style="height:10px;line-height:9px">:30</td><td style="height:10px;line-height:9px">:45</td><td style="height:10px;line-height:9px">:00</td><td style="height:10px;line-height:9px">:15</td><td style="height:10px;line-height:9px">:30</td><td style="height:10px;line-height:9px">:45</td><td style="height:10px;line-height:9px">:00</td><td style="height:10px;line-height:9px">:15</td><td style="height:10px;line-height:9px">:30</td><td style="height:10px;line-height:9px">:45</td><td style="height:10px;line-height:9px">:00</td><td style="height:10px;line-height:9px">:15</td><td style="height:10px;line-height:9px">:30</td><td style="height:10px;line-height:9px">:45</td><td style="height:10px;line-height:9px">:00</td><td style="height:10px;line-height:9px">:15</td><td style="height:10px;line-height:9px">:30</td><td style="height:10px;line-height:9px">:45</td><td style="height:10px;line-height:9px">:00</td><td style="height:10px;line-height:9px">:15</td><td style="height:10px;line-height:9px">:30</td><td style="height:10px;line-height:9px">:45</td><td style="height:10px;line-height:9px">:00</td><td style="height:10px;line-height:9px">:15</td><td style="height:10px;line-height:9px">:30</td><td style="height:10px;line-height:9px">:45</td><td style="height:10px;line-height:9px">:00</td><td style="height:10px;line-height:9px">:15</td></tr>
<tr class="d"><td></td><td></td><td></td><td></td><td></td><td></td><td></td><td></td><td></td><td></td><td></td><td></td><td></td><td></td><td></td><td></td><td></td><td></td><td></td><td></td><td></td><td></td><td></td><td></td><td></td><td></td><td></td><td></td><td></td><td></td><td></td><td></td><td></td><td></td><td></td><td></td><td></td><td></td><td></td><td></td><td></td><td></td><td></td><td></td></tr>
</table>
<div class="dayh" style="top:640px;height:25px;padding-top:5px">Friday 17/07/2015</div>
<div class="doc" style="top:665px">Dr Elizabeth Brown</div>
<svg class="abs" style="left:218px;top:670px" width="12" height="12"><path d="M4 2L9.3 6.5 4 11" stroke="#999" stroke-width="2.3" fill="none"/></svg>
<table class="grid" style="top:640px"><colgroup><col style="width:23px"><col style="width:23px"><col style="width:23px"><col style="width:23px"><col style="width:23px"><col style="width:23px"><col style="width:23px"><col style="width:23px"><col style="width:23px"><col style="width:23px"><col style="width:23px"><col style="width:23px"><col style="width:23px"><col style="width:23px"><col style="width:23px"><col style="width:23px"><col style="width:23px"><col style="width:23px"><col style="width:23px"><col style="width:23px"><col style="width:23px"><col style="width:23px"><col style="width:23px"><col style="width:23px"><col style="width:23px"><col style="width:23px"><col style="width:23px"><col style="width:23px"><col style="width:23px"><col style="width:23px"><col style="width:23px"><col style="width:23px"><col style="width:23px"><col style="width:23px"><col style="width:23px"><col style="width:23px"><col style="width:23px"><col style="width:23px"><col style="width:23px"><col style="width:23px"><col style="width:23px"><col style="width:23px"><col style="width:25px"><col style="width:28px"></colgroup>
<tr class="h"><td colspan="2" style="height:15px;line-height:13px">8:30</td><td colspan="4" style="height:15px;line-height:13px">9:00</td><td colspan="4" style="height:15px;line-height:13px">10:00</td><td colspan="4" style="height:15px;line-height:13px">11:00</td><td colspan="4" style="height:15px;line-height:13px">12:00</td><td colspan="4" style="height:15px;line-height:13px">13:00</td><td colspan="4" style="height:15px;line-height:13px">14:00</td><td colspan="4" style="height:15px;line-height:13px">15:00</td><td colspan="4" style="height:15px;line-height:13px">16:00</td><td colspan="4" style="height:15px;line-height:13px">17:00</td><td colspan="4" style="height:15px;line-height:13px">18:00</td><td colspan="2" style="height:15px;line-height:13px">19:00</td></tr>
<tr class="m"><td style="height:10px;line-height:9px">:30</td><td style="height:10px;line-height:9px">:45</td><td style="height:10px;line-height:9px">:00</td><td style="height:10px;line-height:9px">:15</td><td style="height:10px;line-height:9px">:30</td><td style="height:10px;line-height:9px">:45</td><td style="height:10px;line-height:9px">:00</td><td style="height:10px;line-height:9px">:15</td><td style="height:10px;line-height:9px">:30</td><td style="height:10px;line-height:9px">:45</td><td style="height:10px;line-height:9px">:00</td><td style="height:10px;line-height:9px">:15</td><td style="height:10px;line-height:9px">:30</td><td style="height:10px;line-height:9px">:45</td><td style="height:10px;line-height:9px">:00</td><td style="height:10px;line-height:9px">:15</td><td style="height:10px;line-height:9px">:30</td><td style="height:10px;line-height:9px">:45</td><td style="height:10px;line-height:9px">:00</td><td style="height:10px;line-height:9px">:15</td><td style="height:10px;line-height:9px">:30</td><td style="height:10px;line-height:9px">:45</td><td style="height:10px;line-height:9px">:00</td><td style="height:10px;line-height:9px">:15</td><td style="height:10px;line-height:9px">:30</td><td style="height:10px;line-height:9px">:45</td><td style="height:10px;line-height:9px">:00</td><td style="height:10px;line-height:9px">:15</td><td style="height:10px;line-height:9px">:30</td><td style="height:10px;line-height:9px">:45</td><td style="height:10px;line-height:9px">:00</td><td style="height:10px;line-height:9px">:15</td><td style="height:10px;line-height:9px">:30</td><td style="height:10px;line-height:9px">:45</td><td style="height:10px;line-height:9px">:00</td><td style="height:10px;line-height:9px">:15</td><td style="height:10px;line-height:9px">:30</td><td style="height:10px;line-height:9px">:45</td><td style="height:10px;line-height:9px">:00</td><td style="height:10px;line-height:9px">:15</td><td style="height:10px;line-height:9px">:30</td><td style="height:10px;line-height:9px">:45</td><td style="height:10px;line-height:9px">:00</td><td style="height:10px;line-height:9px">:15</td></tr>
<tr class="d"><td></td><td></td><td></td><td></td><td></td><td></td><td></td><td></td><td></td><td></td><td></td><td></td><td></td><td></td><td></td><td></td><td></td><td></td><td></td><td></td><td></td><td></td><td></td><td></td><td></td><td></td><td></td><td></td><td></td><td></td><td></td><td></td><td></td><td></td><td></td><td></td><td></td><td></td><td></td><td></td><td></td><td></td><td></td><td></td></tr>
</table>
<div class="foot"><span class="abs" style="left:9px;top:10px;font-size:14px;line-height:16px">Support</span><span class="abs" style="right:9px;top:10px;font-size:14px;font-weight:bold;line-height:16px">Elm Tree Clinic</span></div>
<svg class="abs" style="left:563px;top:763px" width="17" height="26" viewBox="0 0 17 26"><defs><linearGradient id="cg" x1="0" y1="0" x2="1" y2="1"><stop offset="0.3" stop-color="#fff"/><stop offset="1" stop-color="#d8d8d8"/></linearGradient></defs><path d="M0.5 0.5L0.5 21.5 5.5 16.8 9.3 25 12.8 23.4 9.2 15.8 15.8 15.8z" fill="url(#cg)" stroke="#151520" stroke-width="1.05" stroke-linejoin="miter"/></svg>
</body></html>
